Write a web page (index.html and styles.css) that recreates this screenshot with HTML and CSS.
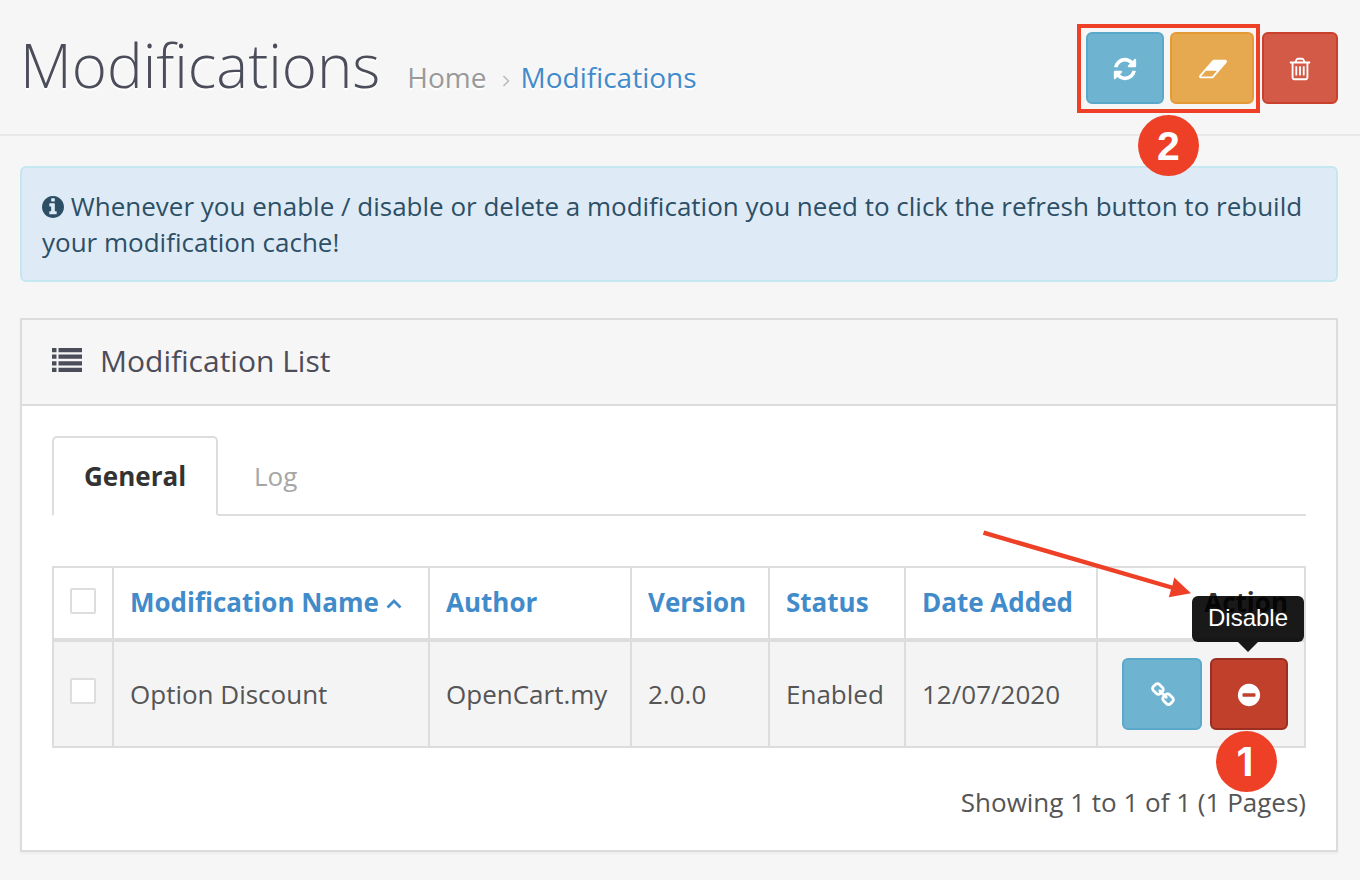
FILE: index.html
```html
<!DOCTYPE html>
<html lang="en">
<head>
<meta charset="utf-8">
<title>Modifications</title>
<link rel="stylesheet" href="styles.css">
</head>
<body>
<header class="page-header">
  <h1>Modifications</h1>
  <nav class="breadcrumb"><a class="crumb" href="#">Home</a><svg class="crumb-sep" viewBox="0 0 8 12"><path d="M1.500 1l5 5-5 5"/></svg><a class="crumb current" href="#">Modifications</a></nav>
  <div class="actions">
    <button class="btn info w-refresh"><svg class="icon" viewBox="0 0 1792 1792"><path d="M1639 1056q0 5-1 7-64 268-268 434.500t-478 166.500q-146 0-282.500-55t-243.500-157l-129 129q-19 19-45 19t-45-19-19-45v-448q0-26 19-45t45-19h448q26 0 45 19t19 45-19 45l-137 137q71 66 161 102t187 36q134 0 250-65t186-179q11-17 53-117 8-23 30-23h192q13 0 22.500 9.500t9.500 22.500zm25-800v448q0 26-19 45t-45 19h-448q-26 0-45-19t-19-45 19-45l138-138q-148-137-349-137-134 0-250 65t-186 179q-11 17-53 117-8 23-30 23h-199q-13 0-22.500-9.500t-9.500-22.500v-7q65-268 270-434.500t480-166.500q146 0 284 55.500t245 156.500l130-129q19-19 45-19t45 19 19 45z"/></svg></button>
    <button class="btn warning w-clear"><svg class="icon wide" viewBox="0 0 2048 1792"><path d="M960 1408l336-384h-768l-336 384h768zm1013-1077q15 34 9.500 71.500t-30.500 65.500l-896 1024q-38 44-96 44h-768q-38 0-69.500-20.500t-47.500-54.500q-15-34-9.500-71.500t30.500-65.500l896-1024q38-44 96-44h768q38 0 69.500 20.500t47.500 54.500z"/></svg></button>
    <button class="btn danger w-delete"><svg class="icon" viewBox="0 0 1792 1792"><path d="M704 736v576q0 14-9 23t-23 9h-64q-14 0-23-9t-9-23v-576q0-14 9-23t23-9h64q14 0 23 9t9 23zm256 0v576q0 14-9 23t-23 9h-64q-14 0-23-9t-9-23v-576q0-14 9-23t23-9h64q14 0 23 9t9 23zm256 0v576q0 14-9 23t-23 9h-64q-14 0-23-9t-9-23v-576q0-14 9-23t23-9h64q14 0 23 9t9 23zm128 724v-948h-896v948q0 22 7 40.500t14.500 27 10.500 8.500h832q3 0 10.500-8.500t14.500-27 7-40.500zm-672-1076h448l-48-117q-7-9-17-11h-317q-10 2-17 11zm928 32v64q0 14-9 23t-23 9h-96v948q0 83-47 143.500t-113 60.500h-832q-66 0-113-58.500t-47-141.500v-952h-96q-14 0-23-9t-9-23v-64q0-14 9-23t23-9h309l70-167q15-37 54-63t79-26h320q40 0 79 26t54 63l70 167h309q14 0 23 9t9 23z"/></svg></button>
    <div class="highlight"></div>
    <div class="marker two">2</div>
  </div>
</header>

<main class="content">
  <div class="alert"><svg class="alert-icon" viewBox="128 128 1536 1536"><path d="M1152 1376v-160q0-14-9-23t-23-9h-96v-512q0-14-9-23t-23-9h-320q-14 0-23 9t-9 23v160q0 14 9 23t23 9h96v320h-96q-14 0-23 9t-9 23v160q0 14 9 23t23 9h448q14 0 23-9t9-23zm-128-896v-160q0-14-9-23t-23-9h-192q-14 0-23 9t-9 23v160q0 14 9 23t23 9h192q14 0 23-9t9-23zm640 416q0 209-103 385.500t-279.500 279.500-385.500 103-385.500-103-279.500-279.500-103-385.500 103-385.500 279.500-279.500 385.500-103 385.500 103 279.500 279.500 103 385.500z"/></svg> Whenever you enable / disable or delete a modification you need to click the refresh button to rebuild your modification cache!</div>

  <section class="panel">
    <div class="panel-heading">
      <svg class="list-icon" viewBox="0 0 30 24"><path d="M0 0h4.500v4.200H0zM6.500 0H30v4.200H6.500zM0 6.600h4.500v4.200H0zM6.500 6.600H30v4.200H6.500zM0 13.200h4.500v4.200H0zM6.500 13.200H30v4.200H6.500zM0 19.800h4.500V24H0zM6.500 19.800H30V24H6.500z"/></svg>
      <h3>Modification List</h3>
    </div>
    <div class="panel-body">
      <div class="tabs"><a class="tab active" href="#">General</a><a class="tab" href="#">Log</a></div>
      <table class="list">
        <colgroup><col class="c-check"><col class="c-name"><col class="c-author"><col class="c-version"><col class="c-status"><col class="c-date"><col class="c-action"></colgroup>
        <thead>
          <tr>
            <th><span class="check"></span></th>
            <th><a href="#">Modification Name<svg class="caret" viewBox="0 0 16 10"><path d="M1.500 8.500L8 2l6.500 6.500"/></svg></a></th>
            <th><a href="#">Author</a></th>
            <th><a href="#">Version</a></th>
            <th><a href="#">Status</a></th>
            <th><a href="#">Date Added</a></th>
            <th class="right">Action</th>
          </tr>
        </thead>
        <tbody>
          <tr>
            <td><span class="check"></span></td>
            <td>Option Discount</td>
            <td>OpenCart.my</td>
            <td>2.0.0</td>
            <td>Enabled</td>
            <td>12/07/2020</td>
            <td>
              <div class="row-actions">
                <button class="btn info w-link"><svg class="icon" viewBox="0 0 1792 1792"><path d="M1520 1216q0-40-28-68l-208-208q-28-28-68-28-42 0-72 32 3 3 19 18.500t21.500 21.500 15 19 13 25.500 3.500 27.500q0 40-28 68t-68 28q-15 0-27.500-3.500t-25.500-13-19-15-21.500-21.500-18.500-19q-33 31-33 73 0 40 28 68l206 207q27 27 68 27 40 0 68-26l147-146q28-28 28-67zm-703-705q0-40-28-68l-206-207q-28-28-68-28-39 0-68 27l-147 146q-28 28-28 67 0 40 28 68l208 208q27 27 68 27 42 0 72-31-3-3-19-18.500t-21.500-21.500-15-19-13-25.500-3.500-27.500q0-40 28-68t68-28q15 0 27.500 3.500t25.500 13 19 15 21.500 21.500 18.500 19q33-31 33-73zm895 705q0 120-85 203l-147 146q-83 83-203 83-121 0-204-85l-206-207q-83-83-83-203 0-123 88-209l-88-88q-86 88-208 88-120 0-204-84l-208-208q-84-84-84-204t85-203l147-146q83-83 203-83 121 0 204 85l206 207q83 83 83 203 0 123-88 209l88 88q86-88 208-88 120 0 204 84l208 208q84 84 84 204z"/></svg></button>
                <button class="btn danger hover w-refresh"><svg class="icon" viewBox="0 0 1792 1792"><path d="M1344 960v-128q0-26-19-45t-45-19h-768q-26 0-45 19t-19 45v128q0 26 19 45t45 19h768q26 0 45-19t19-45zm320-64q0 209-103 385.500t-279.500 279.500-385.500 103-385.500-103-279.500-279.500-103-385.500 103-385.500 279.500-279.500 385.500-103 385.500 103 279.500 279.500 103 385.500z"/></svg></button>
                <div class="tooltip">Disable</div>
                <div class="marker one">1</div>
                <svg class="arrow" viewBox="0 0 212 74"><path d="M4.200 4.600L192.400 59.400 194.200 51.500 211 67.300 188.800 71.200 191 63.600 2.800 8.800z"/></svg>
              </div>
            </td>
          </tr>
        </tbody>
      </table>
      <div class="results">Showing 1 to 1 of 1 (1 Pages)</div>
    </div>
  </section>
</main>
</body>
</html>
```
FILE: styles.css
```css
* { box-sizing: border-box; }
body {
  margin: 0;
  height: 880px;
  overflow: hidden;
  background: #f6f6f6;
  color: #555;
  font: 26px/36px "Open Sans", "Noto Sans", sans-serif;
}
a { color: inherit; text-decoration: none; }

.page-header {
  display: flex;
  align-items: flex-start;
  height: 136px;
  padding: 32px 22px 0 20px;
  border-bottom: 2px solid #e9e9e9;
}
h1 {
  margin: -2px 0 0;
  font-size: 60px;
  line-height: 70px;
  font-weight: 300;
  color: #4c4d5a;
  text-shadow: 0 2px #fff;
}
.breadcrumb {
  display: flex;
  align-items: center;
  margin: 25px 0 0 27px;
  font-size: 28px;
  line-height: 40px;
  color: #999;
  text-shadow: 0 2px #fff;
}
.crumb-sep {
  width: 8px;
  height: 12px;
  margin: 7px 10px 0 16px;
  fill: none;
  stroke: #bbb;
  stroke-width: 1.6;
}
.crumb.current { color: #428bca; }
.actions {
  position: relative;
  display: flex;
  margin-left: auto;
}

.btn {
  display: flex;
  align-items: center;
  justify-content: center;
  height: 72px;
  padding: 2px 0 0;
  border: 2px solid;
  border-radius: 6px;
}
.info { background: #6eb4d1; border-color: #5aa8ca; }
.warning { background: #e7a950; border-color: #e39a37; }
.danger { background: #d35a47; border-color: #c9412d; }
.danger.hover { background: #c0402c; border-color: #9a2f22; }
.w-refresh { width: 78px; }
.w-clear { width: 84px; margin: 0 8px 0 6px; padding-left: 2px; }
.w-delete { width: 76px; }
.w-link { width: 80px; padding-left: 2px; }
.icon { width: 26px; height: 26px; fill: #fff; }
.icon.wide { width: 30px; }

.highlight {
  position: absolute;
  left: -9px;
  top: -8px;
  width: 183px;
  height: 89px;
  border: 4px solid #ee4026;
}
.marker {
  position: absolute;
  width: 61px;
  height: 61px;
  border-radius: 50%;
  background: #ee4026;
  color: #fff;
  font: bold 41px/63px "Liberation Sans", Arial, sans-serif;
  text-align: center;
}
.two { left: 52px; top: 83px; }
.one {
  left: 94px;
  top: 73px;
  padding-right: 3px;
  font: bold 39px/62px Inter, sans-serif;
}

.content { padding: 30px 22px 0 20px; }
.alert {
  height: 116px;
  padding: 20px;
  border: 2px solid #c5e7f0;
  border-radius: 6px;
  background: #deebf6;
  color: #2d4f66;
}
.alert-icon {
  width: 22px;
  height: 22px;
  fill: currentColor;
  vertical-align: -2px;
}

.panel {
  margin-top: 36px;
  height: 534px;
  border: 2px solid #dcdcdc;
  background: #fff;
  box-shadow: 0 2px 2px rgba(0, 0, 0, .04);
}
.panel-heading {
  display: flex;
  align-items: center;
  height: 86px;
  padding: 0 30px 2px;
  border-bottom: 2px solid #dcdcdc;
  background: #f6f6f6;
  color: #4c4d5a;
}
.list-icon { width: 30px; height: 24px; margin: -2px 18px 0 0; fill: currentColor; }
h3 { margin: 0; font-size: 30px; font-weight: 400; }
.panel-body { padding: 30px; }

.tabs {
  display: flex;
  height: 80px;
  margin-bottom: 50px;
  border-bottom: 2px solid #ddd;
}
.tab {
  height: 80px;
  padding: 20px 30px;
  border: 2px solid transparent;
  color: #a6a6a6;
  margin-left: 4px;
}
.tab.active {
  width: 166px;
  margin-left: 0;
  border-color: #ddd #ddd #fff;
  border-radius: 5px 5px 0 0;
  background: #fff;
  color: #333;
  font-weight: 700;
}

.list {
  width: 1254px;
  table-layout: fixed;
  border-collapse: separate;
  border-spacing: 0;
}
.c-check { width: 60px; }
.c-name { width: 316px; }
.c-author { width: 202px; }
.c-version { width: 138px; }
.c-status { width: 136px; }
.c-date { width: 192px; }
.c-action { width: 210px; }
th, td {
  padding: 0 16px;
  border-left: 2px solid #ddd;
  text-align: left;
  vertical-align: middle;
  white-space: nowrap;
}
th:last-child, td:last-child { border-right: 2px solid #ddd; }
th {
  height: 76px;
  padding-bottom: 2px;
  border-top: 2px solid #ddd;
  border-bottom: 4px solid #ddd;
  color: #428bca;
}
th.right { color: #333; text-align: right; }
td {
  height: 106px;
  border-bottom: 2px solid #ddd;
  background: #f4f4f4;
}
.check {
  display: block;
  width: 26px;
  height: 26px;
  margin-bottom: 2px;
  border: 2px solid #ddd;
  border-radius: 2px;
  background: #fff;
}
td .check { margin-bottom: 6px; }
.caret {
  width: 16px;
  height: 10px;
  margin-left: 7px;
  vertical-align: 3px;
  fill: none;
  stroke: currentColor;
  stroke-width: 2.8;
}
.row-actions {
  position: relative;
  display: flex;
  gap: 8px;
  margin-left: 8px;
}
.tooltip {
  position: absolute;
  left: 70px;
  top: -62px;
  width: 112px;
  height: 46px;
  border-radius: 6px;
  background: rgba(0, 0, 0, .9);
  color: #fff;
  font: 24px/44px "Liberation Sans", Arial, sans-serif;
  text-align: center;
}
.tooltip::after {
  content: "";
  position: absolute;
  left: 46px;
  top: 46px;
  border: 10px solid transparent;
  border-top-color: rgba(0, 0, 0, .9);
  border-bottom: 0;
}
.arrow {
  position: absolute;
  left: -142px;
  top: -132px;
  width: 212px;
  height: 74px;
  fill: #ee4026;
}
.results { margin-top: 36px; text-align: right; }
```
